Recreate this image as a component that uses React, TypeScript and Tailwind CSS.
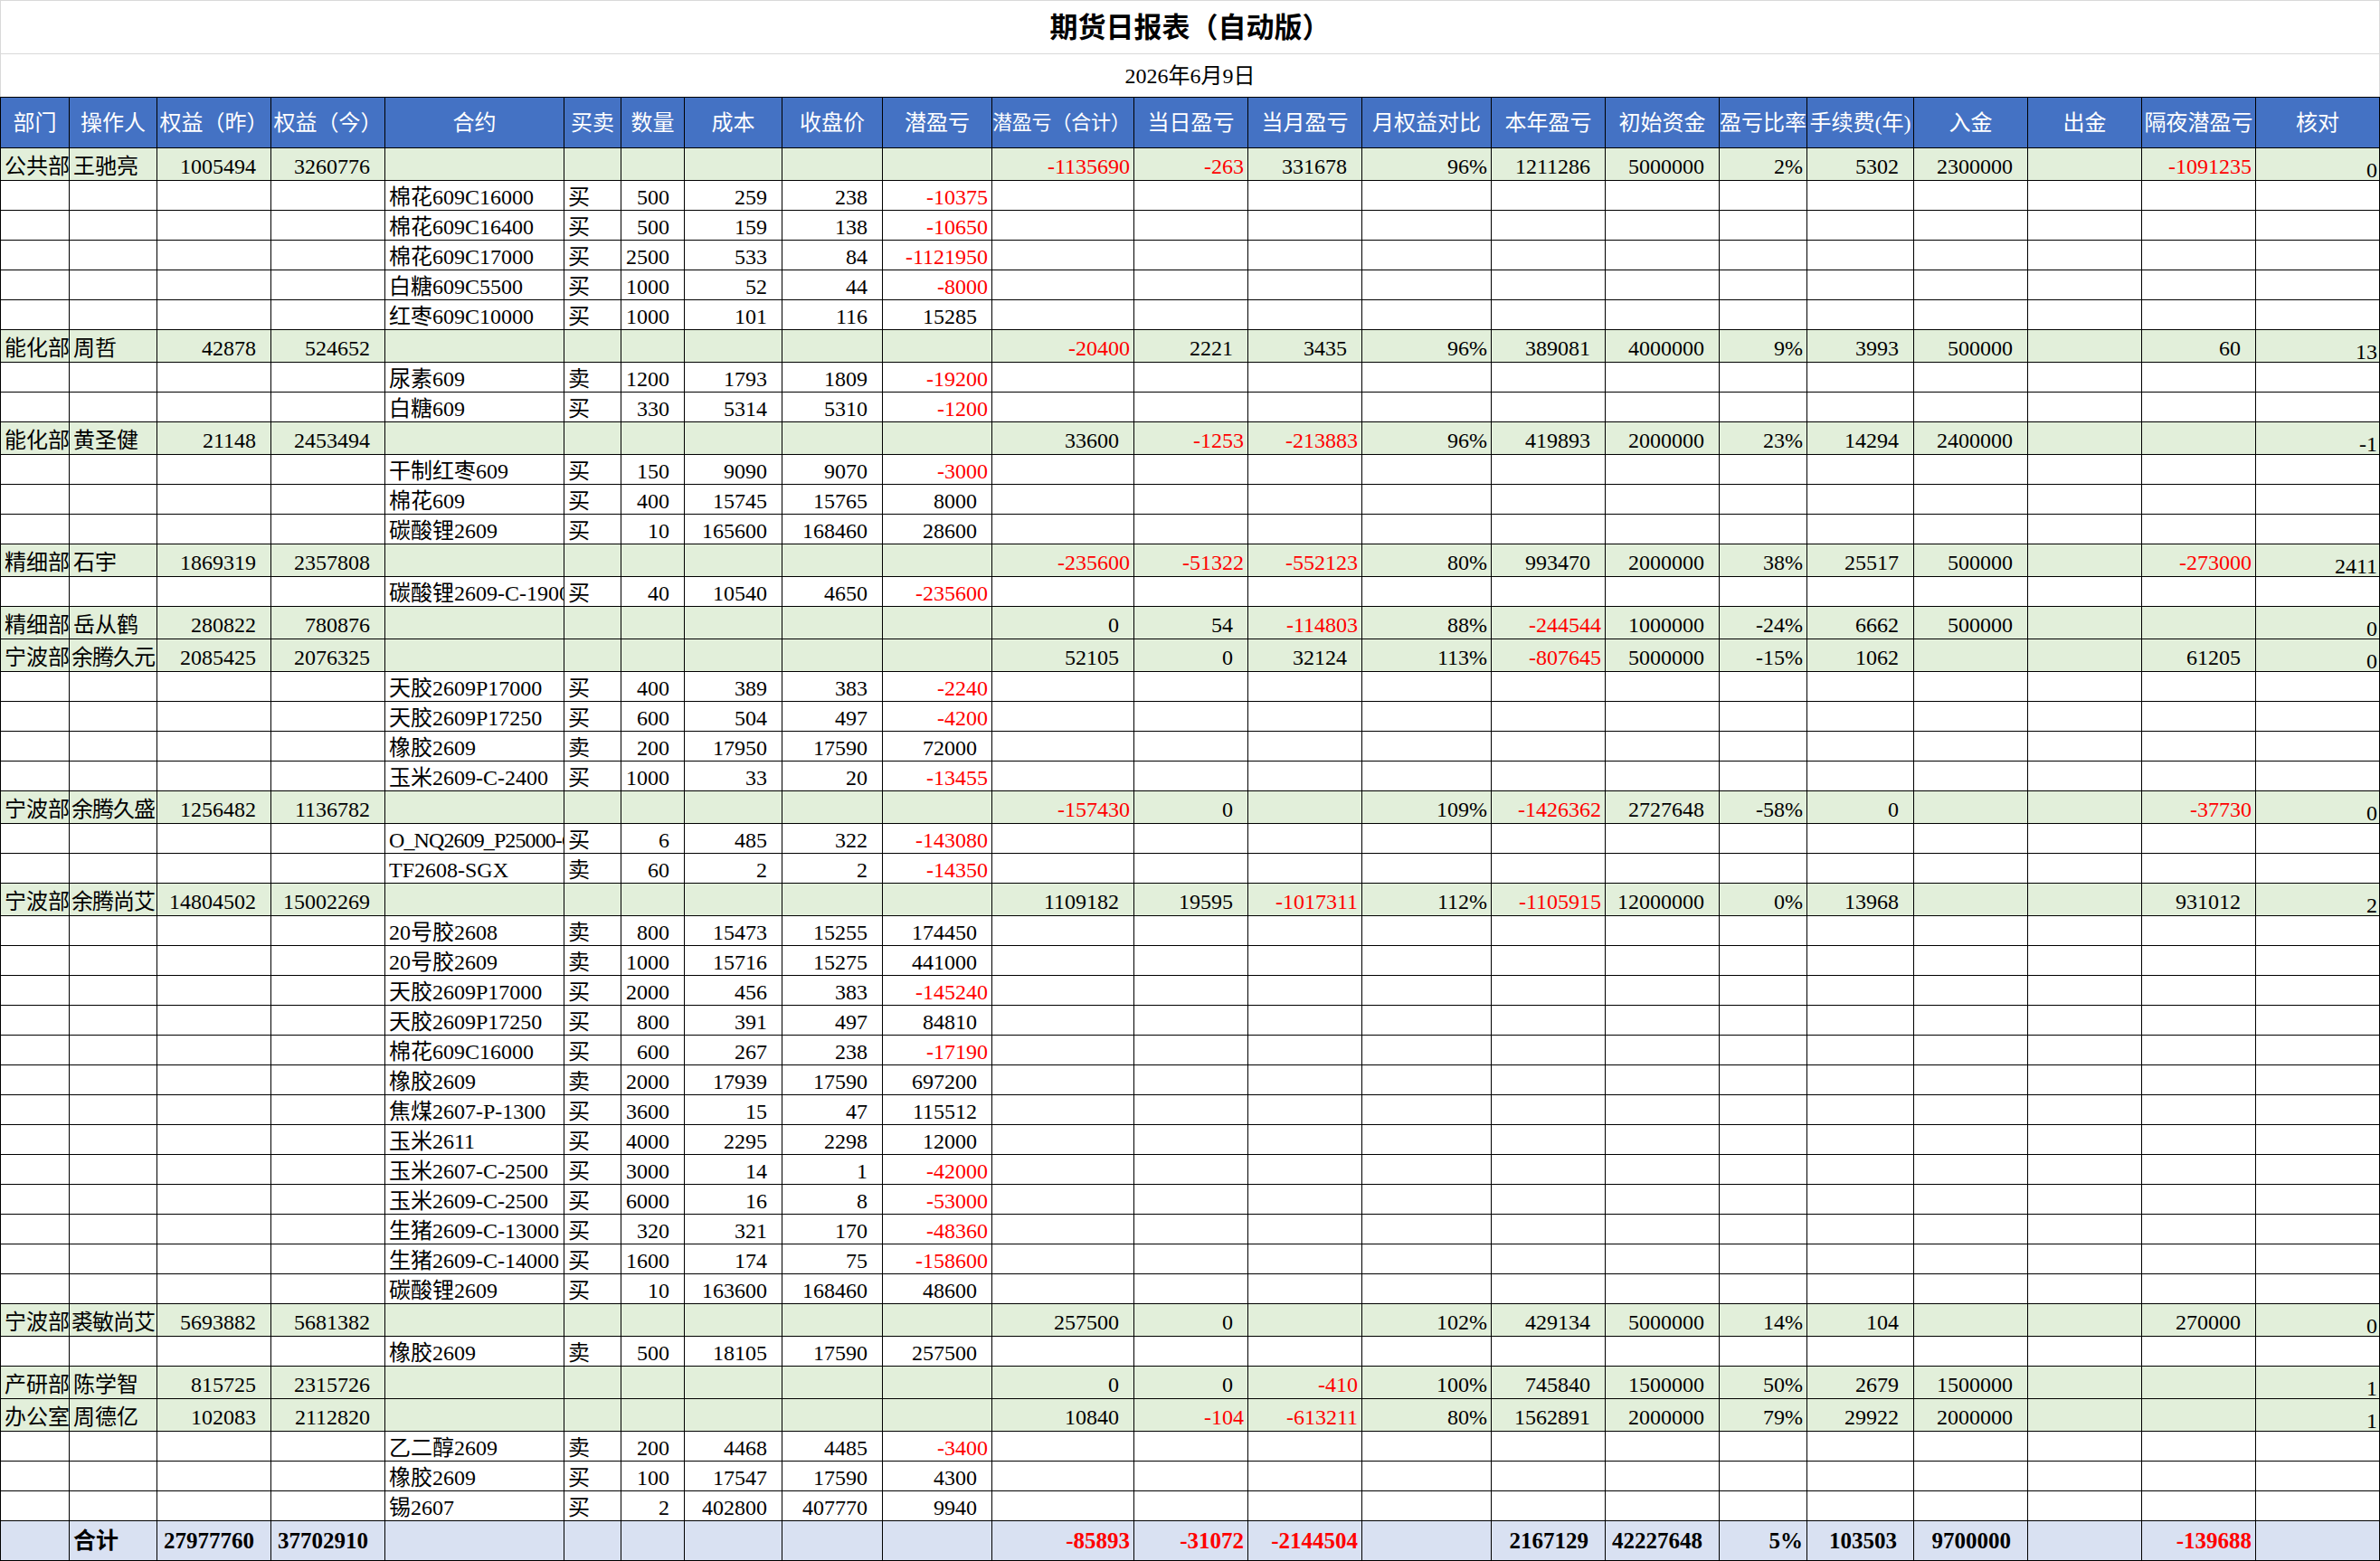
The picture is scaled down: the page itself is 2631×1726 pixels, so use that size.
import React from "react";

type V = string | number | null;
type Kind = "sum" | "det" | "total";
type Row = { kind: Kind; cells: V[] };

const GRID =
  "grid grid-cols-[77px_97px_126px_126px_198px_63px_70px_108px_111px_121px_157px_126px_126px_143px_126px_126px_97px_118px_126px_126px_126px_137px]";

const headers = [
  "部门",
  "操作人",
  "权益（昨）",
  "权益（今）",
  "合约",
  "买卖",
  "数量",
  "成本",
  "收盘价",
  "潜盈亏",
  "潜盈亏（合计）",
  "当日盈亏",
  "当月盈亏",
  "月权益对比",
  "本年盈亏",
  "初始资金",
  "盈亏比率",
  "手续费(年)",
  "入金",
  "出金",
  "隔夜潜盈亏",
  "核对",
];

const sum = (
  dept: string,
  name: string,
  q1: number,
  q2: number,
  total: V,
  day: V,
  month: V,
  ratio: V,
  year: V,
  init: V,
  pl: V,
  fee: V,
  inn: V,
  out: V,
  night: V,
  check: V
): Row => ({
  kind: "sum",
  cells: [dept, name, q1, q2, null, null, null, null, null, null, total, day, month, ratio, year, init, pl, fee, inn, out, night, check],
});

const det = (contract: string, side: string, qty: number, cost: number, close: number, pnl: number): Row => ({
  kind: "det",
  cells: [null, null, null, null, contract, side, qty, cost, close, pnl, null, null, null, null, null, null, null, null, null, null, null, null],
});

const rows: Row[] = [
  sum("公共部", "王驰亮", 1005494, 3260776, -1135690, -263, 331678, "96%", 1211286, 5000000, "2%", 5302, 2300000, null, -1091235, 0),
  det("棉花609C16000", "买", 500, 259, 238, -10375),
  det("棉花609C16400", "买", 500, 159, 138, -10650),
  det("棉花609C17000", "买", 2500, 533, 84, -1121950),
  det("白糖609C5500", "买", 1000, 52, 44, -8000),
  det("红枣609C10000", "买", 1000, 101, 116, 15285),
  sum("能化部", "周哲", 42878, 524652, -20400, 2221, 3435, "96%", 389081, 4000000, "9%", 3993, 500000, null, 60, 13),
  det("尿素609", "卖", 1200, 1793, 1809, -19200),
  det("白糖609", "买", 330, 5314, 5310, -1200),
  sum("能化部", "黄圣健", 21148, 2453494, 33600, -1253, -213883, "96%", 419893, 2000000, "23%", 14294, 2400000, null, null, -1),
  det("干制红枣609", "买", 150, 9090, 9070, -3000),
  det("棉花609", "买", 400, 15745, 15765, 8000),
  det("碳酸锂2609", "买", 10, 165600, 168460, 28600),
  sum("精细部", "石宇", 1869319, 2357808, -235600, -51322, -552123, "80%", 993470, 2000000, "38%", 25517, 500000, null, -273000, 2411),
  det("碳酸锂2609-C-190000", "买", 40, 10540, 4650, -235600),
  sum("精细部", "岳从鹤", 280822, 780876, 0, 54, -114803, "88%", -244544, 1000000, "-24%", 6662, 500000, null, null, 0),
  sum("宁波部", "余腾久元", 2085425, 2076325, 52105, 0, 32124, "113%", -807645, 5000000, "-15%", 1062, null, null, 61205, 0),
  det("天胶2609P17000", "买", 400, 389, 383, -2240),
  det("天胶2609P17250", "买", 600, 504, 497, -4200),
  det("橡胶2609", "卖", 200, 17950, 17590, 72000),
  det("玉米2609-C-2400", "买", 1000, 33, 20, -13455),
  sum("宁波部", "余腾久盛", 1256482, 1136782, -157430, 0, null, "109%", -1426362, 2727648, "-58%", 0, null, null, -37730, 0),
  det("O_NQ2609_P25000-C", "买", 6, 485, 322, -143080),
  det("TF2608-SGX", "卖", 60, 2, 2, -14350),
  sum("宁波部", "余腾尚艾", 14804502, 15002269, 1109182, 19595, -1017311, "112%", -1105915, 12000000, "0%", 13968, null, null, 931012, 2),
  det("20号胶2608", "卖", 800, 15473, 15255, 174450),
  det("20号胶2609", "卖", 1000, 15716, 15275, 441000),
  det("天胶2609P17000", "买", 2000, 456, 383, -145240),
  det("天胶2609P17250", "买", 800, 391, 497, 84810),
  det("棉花609C16000", "买", 600, 267, 238, -17190),
  det("橡胶2609", "卖", 2000, 17939, 17590, 697200),
  det("焦煤2607-P-1300", "买", 3600, 15, 47, 115512),
  det("玉米2611", "买", 4000, 2295, 2298, 12000),
  det("玉米2607-C-2500", "买", 3000, 14, 1, -42000),
  det("玉米2609-C-2500", "买", 6000, 16, 8, -53000),
  det("生猪2609-C-13000", "买", 320, 321, 170, -48360),
  det("生猪2609-C-14000", "买", 1600, 174, 75, -158600),
  det("碳酸锂2609", "买", 10, 163600, 168460, 48600),
  sum("宁波部", "裘敏尚艾", 5693882, 5681382, 257500, 0, null, "102%", 429134, 5000000, "14%", 104, null, null, 270000, 0),
  det("橡胶2609", "卖", 500, 18105, 17590, 257500),
  sum("产研部", "陈学智", 815725, 2315726, 0, 0, -410, "100%", 745840, 1500000, "50%", 2679, 1500000, null, null, 1),
  sum("办公室", "周德亿", 102083, 2112820, 10840, -104, -613211, "80%", 1562891, 2000000, "79%", 29922, 2000000, null, null, 1),
  det("乙二醇2609", "卖", 200, 4468, 4485, -3400),
  det("橡胶2609", "买", 100, 17547, 17590, 4300),
  det("锡2607", "买", 2, 402800, 407770, 9940),
];

const totalRow: Row = {
  kind: "total",
  cells: [null, "合计", 27977760, 37702910, null, null, null, null, null, null, -85893, -31072, -2144504, null, 2167129, 42227648, "5%", 103503, 9700000, null, -139688, null],
};

function BodyCell({ v, col, kind }: { v: V; col: number; kind: Kind }) {
  const isText = col === 0 || col === 1 || col === 4 || col === 5;
  const isNum = typeof v === "number";
  const neg = isNum && (v as number) < 0;
  const pct = typeof v === "string" && v.endsWith("%");
  const check = col === 21;
  const longName = col === 1 && typeof v === "string" && v.length >= 4;
  const tightContract = col === 4 && typeof v === "string" && v.startsWith("O_NQ");

  let align: string;
  if (longName) align = "justify-start pl-[2px] tracking-[-1px]";
  else if (tightContract) align = "justify-start pl-[4px] tracking-[-0.9px]";
  else if (isText) align = "justify-start pl-[4px]";
  else if (check) align = "justify-end pr-[2px]";
  else if (neg || pct) align = "justify-end pr-[4px]";
  else align = kind === "total" ? "justify-end pr-[18px]" : "justify-end pr-[16px]";

  const color = neg && !check ? "text-[#ff0000]" : "text-black";

  let vert: string;
  if (kind === "total") vert = "items-center leading-[30px]";
  else if (check) vert = "items-end leading-[22px]";
  else if (kind === "sum") vert = "items-end pb-[1px] leading-[28px]";
  else vert = "items-end leading-[28px]";

  const bg = kind === "sum" ? "bg-[#e2efda]" : kind === "total" ? "bg-[#d9e1f2]" : "bg-white";
  const left = col === 0 ? "border-l" : "";
  const weight = kind === "total" ? "font-bold text-[25px]" : "text-[24px]";

  return (
    <div
      className={`flex min-w-0 overflow-hidden whitespace-nowrap border-r border-b border-black ${left} ${bg} ${align} ${vert} ${color} ${weight}`}
    >
      {v === null ? "" : String(v)}
    </div>
  );
}

function BodyRow({ row }: { row: Row }) {
  const h = row.kind === "sum" ? "h-[36px]" : row.kind === "total" ? "h-[44px]" : "h-[33px]";
  return (
    <div className={`${GRID} ${h}`}>
      {row.cells.map((v, i) => (
        <BodyCell key={i} v={v} col={i} kind={row.kind} />
      ))}
    </div>
  );
}

export default function App() {
  return (
    <div className="w-[2631px] h-[1726px] overflow-hidden bg-white font-['Liberation_Serif','Noto_Sans_CJK_SC',serif] text-black">
      <div className="h-[60px] flex items-center justify-center border-t border-x border-b border-[#d9d9d9] text-[31px] font-bold leading-none">
        期货日报表（自动版）
      </div>
      <div className="h-[47px] flex items-center justify-center border-x border-[#d9d9d9] text-[24px]">
        2026年6月9日
      </div>
      <div className={`${GRID} h-[57px] border-t border-black`}>
        {headers.map((h, i) => (
          <div
            key={i}
            className={`flex items-center overflow-hidden whitespace-nowrap bg-[#4472c4] text-white border-r border-b border-black ${
              i === 0 ? "border-l" : ""
            } ${i === 10 ? "justify-start text-[22px] tracking-[-0.2px]" : "justify-center text-[24px]"}`}
          >
            {h}
          </div>
        ))}
      </div>
      {rows.map((r, i) => (
        <BodyRow key={i} row={r} />
      ))}
      <BodyRow row={totalRow} />
    </div>
  );
}
